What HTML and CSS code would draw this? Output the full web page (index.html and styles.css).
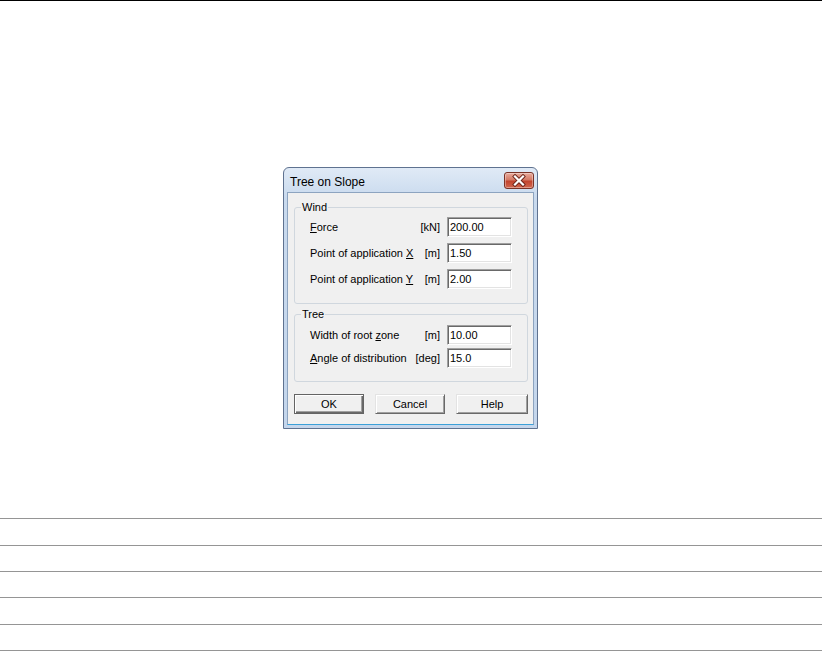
FILE: index.html
```html
<!DOCTYPE html>
<html>
<head>
<meta charset="utf-8">
<title>Tree on Slope</title>
<link rel="stylesheet" href="styles.css">
</head>
<body>
<div class="topline"></div>
<div class="dialog">
  <div class="titlebar">
    <span class="title">Tree on Slope</span>
    <span class="close">
      <svg width="30" height="17" viewBox="0 0 30 17">
        <path d="M11 4.5 L19 12.5 M19 4.5 L11 12.5" stroke="#6a2218" stroke-width="4" stroke-linecap="square" fill="none"/>
        <path d="M11 4.5 L19 12.5 M19 4.5 L11 12.5" stroke="#ffffff" stroke-width="2.2" stroke-linecap="square" fill="none"/>
      </svg>
    </span>
  </div>
  <div class="content">
    <fieldset class="group group-wind">
      <legend>Wind</legend>
      <div class="row">
        <span class="lbl"><u>F</u>orce</span>
        <span class="unit">[kN]</span>
        <span class="field">200.00</span>
      </div>
      <div class="row">
        <span class="lbl">Point of application <u>X</u></span>
        <span class="unit">[m]</span>
        <span class="field">1.50</span>
      </div>
      <div class="row">
        <span class="lbl">Point of application <u>Y</u></span>
        <span class="unit">[m]</span>
        <span class="field">2.00</span>
      </div>
    </fieldset>
    <fieldset class="group group-tree">
      <legend>Tree</legend>
      <div class="row">
        <span class="lbl">Width of root <u>z</u>one</span>
        <span class="unit">[m]</span>
        <span class="field">10.00</span>
      </div>
      <div class="row">
        <span class="lbl"><u>A</u>ngle of distribution</span>
        <span class="unit">[deg]</span>
        <span class="field">15.0</span>
      </div>
    </fieldset>
    <div class="buttons">
      <span class="btn btn-default">OK</span>
      <span class="btn">Cancel</span>
      <span class="btn">Help</span>
    </div>
  </div>
</div>
<div class="rules">
  <div class="rule"></div>
  <div class="rule"></div>
  <div class="rule"></div>
  <div class="rule"></div>
  <div class="rule"></div>
  <div class="rule"></div>
</div>
</body>
</html>
```
FILE: styles.css
```css
* { box-sizing: border-box; }
html, body { margin: 0; padding: 0; background: #ffffff; }
body {
  width: 822px;
  height: 651px;
  overflow: hidden;
  font-family: "Liberation Sans", Arial, sans-serif;
  font-size: 11px;
  color: #000;
}
.topline { height: 1px; background: #000; }

.dialog {
  width: 255px;
  margin: 166px 0 0 283px;
  border: 1px solid #5f7290;
  border-radius: 6px 6px 0 0;
  padding: 0 3px 3px 3px;
  background: linear-gradient(#e0eaf6, #c9daee 30px, #c4d6ec);
}
.titlebar {
  height: 24px;
  display: flex;
  justify-content: space-between;
  align-items: flex-start;
}
.title {
  padding: 7px 0 0 3px;
  font-size: 12px;
  line-height: 14px;
  color: #000;
}
.close {
  margin-top: 4px;
  width: 30px;
  height: 17px;
  border: 1px solid #7a3328;
  border-radius: 3px;
  background: linear-gradient(#e9ab9d, #d47a66 45%, #c2442e 55%, #d2674f);
  display: flex;
  box-shadow: inset 0 0 0 1px rgba(255,255,255,0.35);
}
.close svg { display: block; margin: -1px; }

.content {
  background: #f0f0f0;
  border: 1px solid #8da4c0;
  border-bottom-color: #3aa0d8;
  padding: 7px 5px 10px 6px;
}

.group {
  margin: 0;
  padding: 3px 15px 14px 15px;
  border: 1px solid #d0d7de;
  border-radius: 3px;
  min-width: 0;
}
.group legend {
  margin-left: -9px;
  padding: 0 1px;
  line-height: 14px;
}
.group-tree {
  margin-top: 3px;
  padding-top: 4px;
  padding-bottom: 13px;
}
.row {
  display: grid;
  grid-template-columns: 1fr auto 65px;
  column-gap: 7px;
  align-items: center;
  height: 20px;
}
.group-wind .row + .row { margin-top: 6px; }
.group-tree .row + .row { margin-top: 3px; }
.lbl { white-space: nowrap; }
.unit { text-align: right; white-space: nowrap; }
.field {
  height: 20px;
  background: #fff;
  border: 1px solid;
  border-color: #a0a0a0 #ffffff #ffffff #a0a0a0;
  box-shadow: inset 1px 1px 0 #696969, inset -1px -1px 0 #e3e3e3;
  padding: 2px 0 0 2px;
  line-height: 14px;
}

.buttons {
  margin-top: 12px;
  display: flex;
  gap: 11px;
}
.btn {
  width: 70px;
  height: 20px;
  display: flex;
  align-items: center;
  justify-content: center;
  background: #f0f0f0;
  border: 1px solid;
  border-color: #e3e3e3 #696969 #696969 #e3e3e3;
  box-shadow: inset 1px 1px 0 #ffffff, inset -1px -1px 0 #a0a0a0;
}
.btn-default {
  border-color: #646464;
  box-shadow: inset 1px 1px 0 #ffffff, inset -1px -1px 0 #696969, inset -2px -2px 0 #a0a0a0;
}
.btn:nth-child(3) { width: 72px; }

.rules {
  margin-top: 89px;
  display: grid;
  grid-template-rows: 27px 26px 26px 27px 26px 1px;
}
.rule { border-top: 1px solid #959595; }
```
